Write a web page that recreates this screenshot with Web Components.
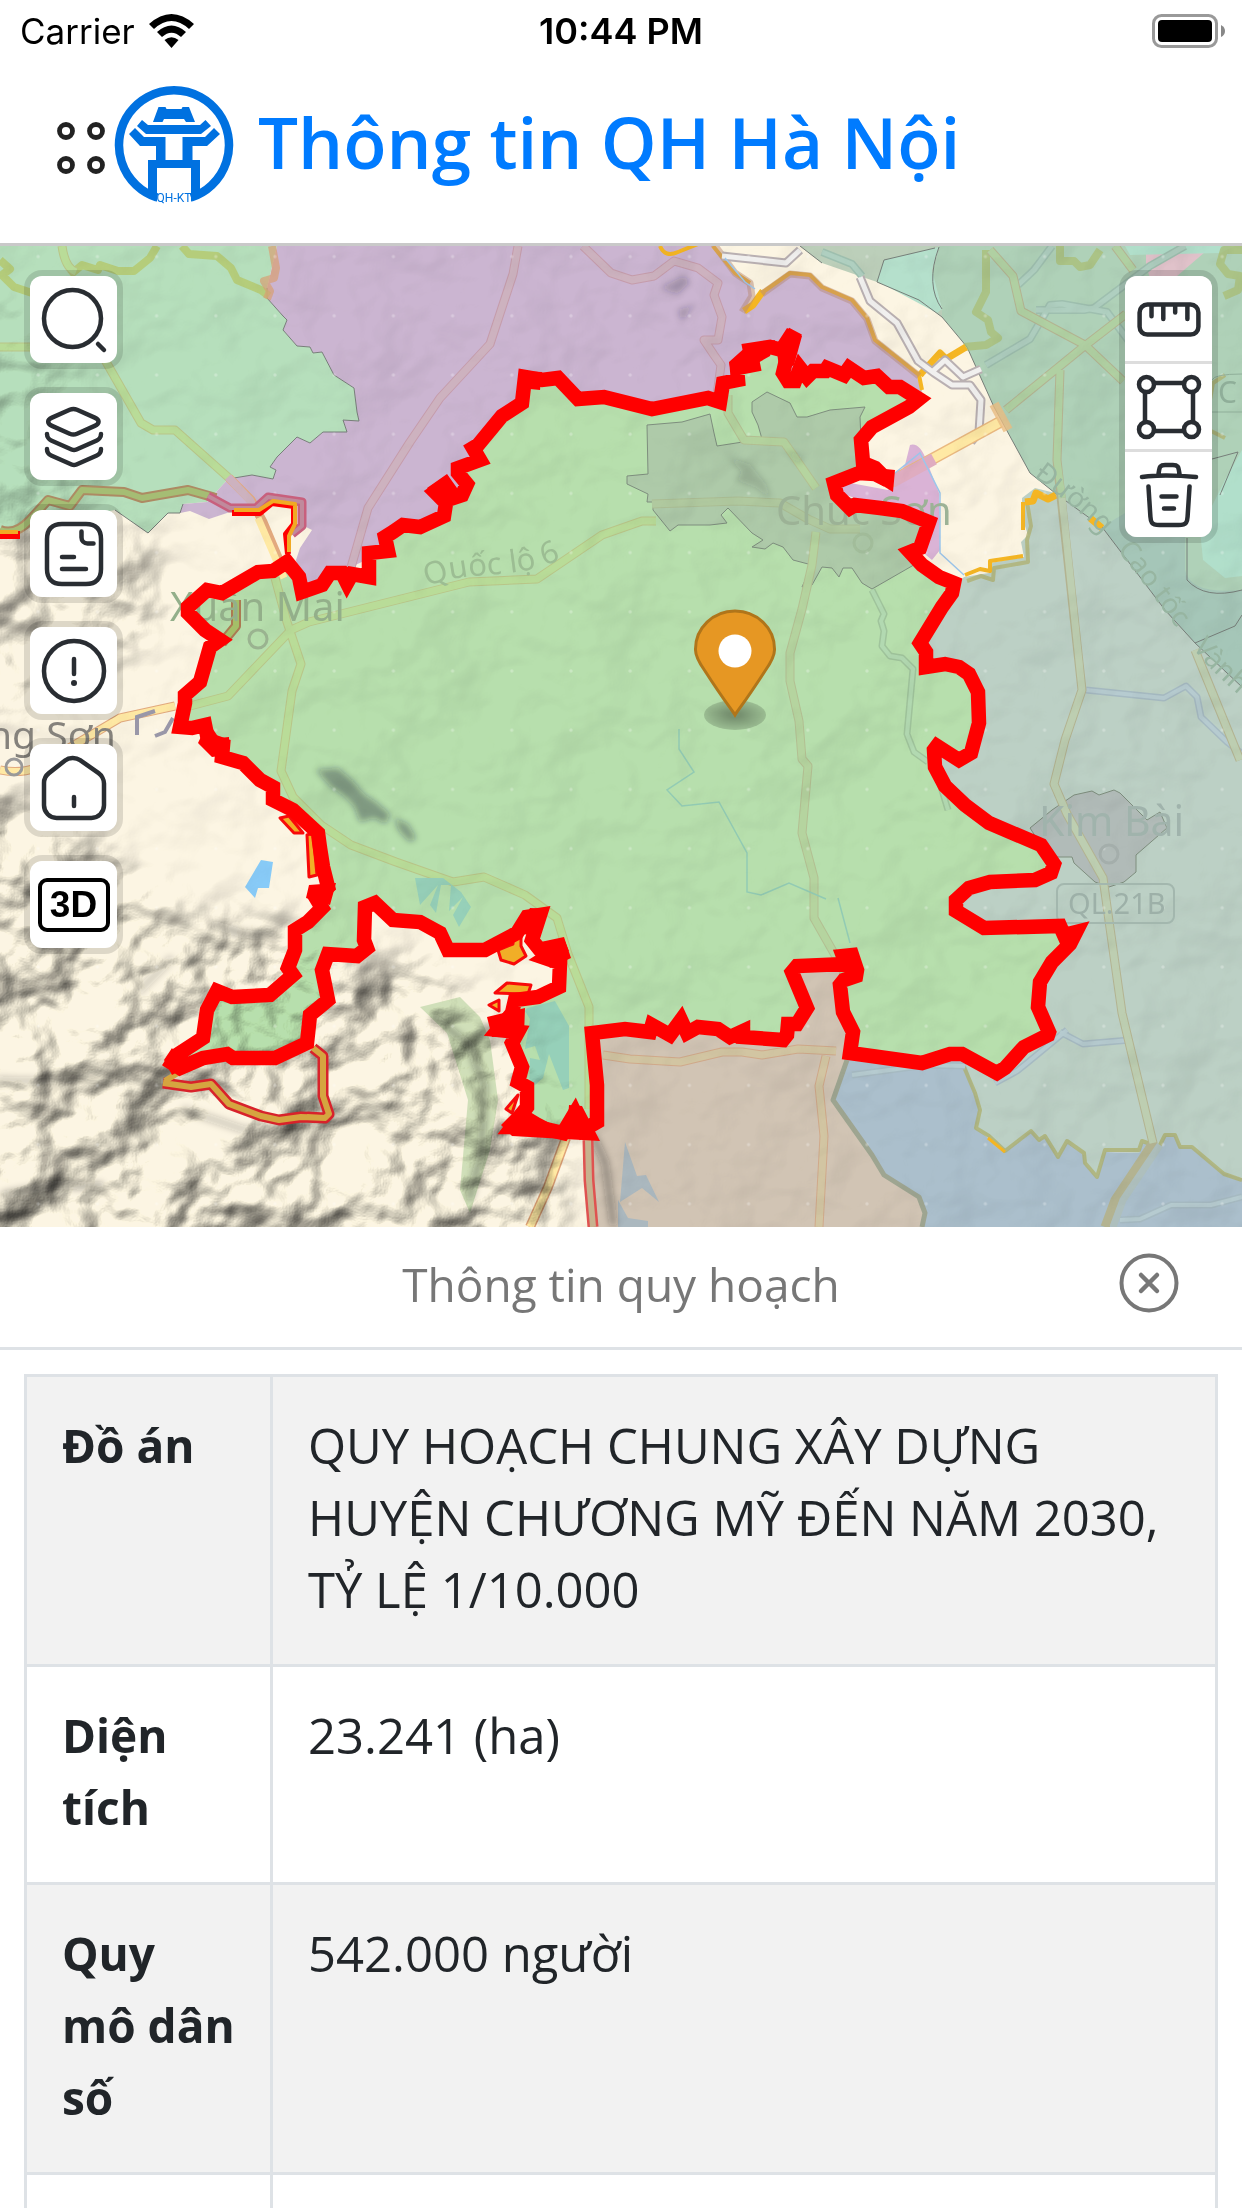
<!DOCTYPE html>
<html lang="vi">
<head>
<meta charset="utf-8">
<meta name="viewport" content="width=device-width, initial-scale=1">
<title>Thông tin QH Hà Nội</title>
<style>
html,body{margin:0;height:100%}
body{font-family:"Open Sans","Noto Sans",sans-serif;color:#212529;background:#fff}
</style>
</head>
<body>
<qh-app></qh-app>

<template id="t-app">
<style>
:host{display:flex;flex-direction:column;height:100vh;overflow:hidden;background:#fff}
</style>
<status-bar></status-bar>
<app-header>Thông tin QH Hà Nội</app-header>
<planning-map>
  <tool-group slot="left" gap>
    <tool-button label="Tìm kiếm" icon="search"></tool-button>
    <tool-button label="Lớp bản đồ" icon="layers"></tool-button>
    <tool-button label="Ghi chú" icon="note"></tool-button>
    <tool-button label="Thông tin" icon="info"></tool-button>
    <tool-button label="Trang chủ" icon="home"></tool-button>
    <tool-button label="3D" icon="three">3D</tool-button>
  </tool-group>
  <tool-group slot="right">
    <tool-button label="Đo khoảng cách" icon="ruler"></tool-button>
    <tool-button label="Đo diện tích" icon="shape"></tool-button>
    <tool-button label="Xóa" icon="trash"></tool-button>
  </tool-group>
</planning-map>
<info-panel>Thông tin quy hoạch</info-panel>
</template>

<template id="t-status">
<style>
:host{display:grid;grid-template-columns:1fr auto 1fr;align-items:center;height:62px;padding:0 16px;font-family:Inter,"Liberation Sans",sans-serif;font-size:35px;line-height:48px;color:#000;flex:none}
.l{display:flex;align-items:center;gap:14px;padding-left:4px}
b{font-weight:600;font-size:36px}
.r{justify-self:end}
svg{display:block}
</style>
<span class="l"><span>Carrier</span>
<svg width="45" height="34" viewBox="0 0 45 34"><path d="M0 10Q22.500-10 45 10L40 15Q22.500-1 5 15Z"/><path d="M8 18Q22.500 5 37 18L32 23Q22.500 14.500 13 23Z"/><path d="M15.500 26Q22.500 20.500 29.500 26L22.500 34Z"/></svg></span>
<b>10:44 PM</b>
<svg class="r" width="74" height="34" viewBox="0 0 74 34"><rect x="1.500" y="1.500" width="63" height="31" rx="8" fill="none" stroke="#999" stroke-width="3"/><rect x="6" y="6" width="54" height="22" rx="4"/><path d="M69 11q4 2 4 6t-4 6z" fill="#888"/></svg>
</template>

<template id="t-header">
<style>
:host{display:flex;align-items:center;height:184px;box-sizing:border-box;border-bottom:3px solid #c9c9c9;padding:0 51px 16px;flex:none}
button{border:0;background:none;padding:0;width:60px;height:60px;margin-top:6px}
svg{display:block}
h1{margin:0 0 6px 24px;font-size:71px;line-height:96px;font-weight:600;color:#007bff}
.logo{margin-left:3px}
</style>
<button aria-label="Menu"><svg width="60" height="60" viewBox="51 118 60 60" fill="none" stroke="#222" stroke-width="4.800"><circle cx="66" cy="131" r="6.500"/><circle cx="96" cy="131" r="6.500"/><circle cx="66" cy="165" r="6.500"/><circle cx="96" cy="165" r="6.500"/></svg></button>
<svg class="logo" width="120" height="120" viewBox="114 84 120 120"><g fill="#0071e0"><path d="M158.500 106h7l1 2h15l1-2h6.500l6 15h-9l-2-3h-20l-1.500 3h-9.500z"/><path d="M142 119l6 5h52l5.500-5 5.500 6-10 8h-55l-9-8z"/><path fill-rule="evenodd" d="M135 127l9 9h61l9-9 6 6-13 12h-14.500v14h7.500v32l-9 10v-34h-34v34l-9-10v-32h8v-14h-16l-11-12zM165.500 136v23h17v-23z"/></g><path d="M157 196.500A55 55 0 1 1 191 196.500" fill="none" stroke="#0071e0" stroke-width="8.500"/><text x="174" y="201" text-anchor="middle" font-family="Roboto,sans-serif" font-size="12" fill="#0071e0">QH-KT</text></svg>
<h1><slot></slot></h1>
</template>

<template id="t-group">
<style>
:host{display:flex;flex-direction:column;gap:3px;background:#ddd;border-radius:12px;box-shadow:0 0 0 6px rgba(0,0,0,.13);--r:0px;--h:85px}
:host([gap]){gap:30px;background:none;box-shadow:none;--r:12px;--s:0 0 0 6px rgba(0,0,0,.12);--h:87px}
::slotted(:first-child){border-radius:12px 12px var(--r) var(--r)}
::slotted(:last-child){border-radius:var(--r) var(--r) 12px 12px}
</style>
<slot></slot>
</template>

<template id="t-button">
<style>
:host{display:block;width:87px;height:var(--h);background:#fff;border-radius:var(--r);box-shadow:var(--s)}
button{display:flex;align-items:center;justify-content:center;width:100%;height:100%;padding:0;border:0;background:none;color:#000}
svg{display:block;width:72px;height:72px;fill:none;stroke:#292d32;stroke-width:1.500;stroke-linecap:round;stroke-linejoin:round}
:host([icon=three]) button span{box-sizing:border-box;width:72px;height:54px;border:4px solid #000;border-radius:9px;font:700 37px/46px "Liberation Sans",sans-serif}
</style>
<button></button>
</template>

<template id="t-map">
<style>
:host{display:block;position:relative;flex:none;overflow:hidden}
svg{display:block;width:100%;height:auto}
.left,.right{position:absolute;top:30px}
.left{left:30px}.right{right:30px}
</style>
<svg viewBox="0 246 1242 981" role="img" aria-label="Bản đồ quy hoạch huyện Chương Mỹ">
<defs>
<filter id="relief" x="0" y="0" width="100%" height="100%" color-interpolation-filters="sRGB"><feTurbulence type="fractalNoise" baseFrequency=".011 .013" numOctaves="4" seed="11"/><feGaussianBlur stdDeviation="2.500"/><feDiffuseLighting surfaceScale="32" diffuseConstant="1.160" lighting-color="#fffffa"><feDistantLight azimuth="225" elevation="56"/></feDiffuseLighting></filter>
<filter id="b3" x="-20%" y="-20%" width="140%" height="140%"><feGaussianBlur stdDeviation="3"/></filter>
<filter id="b20" x="-20%" y="-20%" width="140%" height="140%"><feGaussianBlur stdDeviation="20"/></filter>
<mask id="hills" maskUnits="userSpaceOnUse" x="0" y="246" width="1242" height="981"><rect x="0" y="246" width="1242" height="981" fill="#0e0e0e"/><g filter="url(#b20)"><path d="M-60 500L150 540 170 600 120 660 60 700-60 720z" fill="#888"/><path d="M-60 760L80 840 180 920 280 920 350 970 420 960 560 1100 560 1280-60 1280z" fill="#c4c4c4"/><path d="M-60 300L60 330 110 480-60 560z" fill="#555"/></g></mask>
<pattern id="dots" x="423" y="227" width="59.200" height="59.200" patternUnits="userSpaceOnUse"><circle cx="29.600" cy="29.600" r="1.700" fill="#fff" opacity=".28"/></pattern>
<path id="hw" d="M1033 476C1085 515 1105 532 1150 592S1205 670 1270 720L1400 800"/>
<path id="q6" d="M427 587C470 568 510 582 560 560L620 528"/>
<path id="district" d="M188 613L188 607 207 590 222 593 258 572 273 571 287 562 299 577 302 592 322 585 330 573 342 573 347 583 352 574 369 577 369 553 388 551 385 537 393 532 403 525 420 527 444 516 446 503 435 492 445 485 453 498 462 495 467 484 458 473 458 468 480 460 473 448 478 445 502 416 522 403 525 377 542 380 558 378 578 399 604 397 652 409 708 398 720 402 723 383 738 380 737 368 753 365 750 350 770 347 782 350 795 332 788 352 783 373 788 381 795 381 800 368 807 377 813 371 825 371 827 368 844 375 849 368 864 378 877 376 889 387 900 387 919 399 909 407 872 427 861 440 863 463 875 468 887 480 875 474 859 473 834 483 837 495 850 508 855 505 880 508 902 511 929 522 920 548 910 552 922 565 939 577 954 583 952 593 942 607 920 643 926 652 926 667 945 664 959 667 969 674 978 692 979 723 971 753 959 760 937 746 934 750 935 767 945 786 965 805 989 823 1041 845 1054 864 1051 873 1035 880 990 882 969 888 956 900 956 911 984 928 1060 926 1064 935 1076 932 1070 944 1052 962 1040 982 1038 1007 1049 1032 1048 1035 1024 1047 1005 1068 997 1073 962 1054 950 1054 922 1063 850 1053 853 1032 843 1012 840 985 844 980 856 976 857 970 852 955 843 956 846 964 797 966 792 972 807 1008 797 1024 788 1024 787 1035 783 1040 743 1037 743 1031 730 1037 718 1029 698 1027 687 1033 681 1020 670 1035 652 1025 650 1032 625 1029 592 1033 597 1085 597 1122 583 1130 575 1113 563 1133 537 1127 512 1127 527 1107 527 1087 518 1082 522 1067 512 1043 518 1032 498 1030 512 1013 515 1000 538 997 559 987 560 963 545 958 565 945 540 950 532 940 540 915 527 917 517 933 485 950 448 950 440 933 420 922 393 920 375 903 365 907 364 940 367 948 357 956 328 954 322 970 328 1000 310 1015 307 1043 275 1058 233 1058 227 1054 203 1058 180 1068 172 1063 177 1055 203 1038 207 1010 217 991 232 997 270 995 293 975 288 968 295 950 295 930 308 922 322 908 316 898 328 887 323 867 320 848 318 833 293 810 273 800 273 787 260 780 243 763 222 757 223 745 208 740 205 725 192 728 180 727 185 703 185 695 200 682 210 647 220 640 205 630Z"/>
</defs>
<rect x="0" y="246" width="1242" height="981" fill="#fcf5e3"/>

<g stroke="none">
<path fill="#b6dfbc" d="M0 246H277L267 288 267 298 283 316 287 320 283 330 297 346 310 347 313 353 322 352 334 375 354 388 357 412 359 421 343 420 347 432 323 432 310 443 297 437 277 457 270 467 276 470 273 479 252 475 228 479 207 502 183 504 180 513 168 513 148 533 115 510 60 520 0 536Z"/>
<path fill="#cbb5d1" d="M277 246H713L735 273 750 283 752 296 743 313 763 292 790 273 810 275 822 287 852 300 867 318 875 340 919 375 922 390 920 400 720 410 520 420 430 530 302 590 296 560 300 548 312 530 302 525 304 500 268 496 255 508 230 512 209 519 190 511 180 513 183 504 207 502 228 479 252 475 273 479 276 470 270 467 277 457 297 437 310 443 323 432 347 432 343 420 359 421 357 412 354 388 334 375 322 352 313 353 310 347 297 346 283 330 287 320 283 316 267 298 267 288Z"/>
<path fill="#bccfba" d="M800 246H939L932 275 942 309 942 317 919 300 877 282 822 263Z"/>
<path fill="#afd1b8" d="M939 246H1242V687L1195 643 1165 610 1102 527 1055 493 1030 473 1012 440 994 407 967 347 942 317 942 309 932 275Z"/>
<path fill="#b5e0cc" d="M884 260L939 247 932 270 942 309 937 313 877 281Z"/>
<path fill="#a5c6b8" d="M1102 527L1125 513 1185 508V570Q1190 595 1242 590V687L1195 643 1165 610Z"/>
<path fill="#e0c2ca" d="M1146 246H1212L1155 295 1146 265Z"/>
<path fill="#b1dfcb" d="M1242 450L1225 480 1200 530 1203 560 1225 578 1242 576ZM1125 246h110l-15 7-90 2z"/>
<path fill="#bcd0c5" d="M940 600L964 577 989 573 990 563 1024 557 1021 542 1028 535 1022 517 1022 498 1035 488 1055 493 1102 527 1165 610 1195 643 1242 687V1178L1224 1173 1192 1147 1180 1147 1175 1135 1165 1136 1159 1147 1142 1142 1139 1153 1105 1152 1097 1178 1085 1163 1084 1155 1067 1142 1058 1157 1045 1135 1039 1140 1031 1130 1005 1152 989 1138 976 1128 980 1110 975 1093 964 1067 930 900 920 643Z"/>
<path fill="#abbfcc" d="M847 1055L964 1058 975 1093 980 1110 976 1128 1005 1152 1031 1130 1039 1140 1045 1135 1058 1157 1067 1142 1084 1155 1085 1163 1097 1178 1105 1152 1139 1153 1142 1142 1159 1147 1165 1136 1175 1135 1180 1147 1192 1147 1224 1173 1242 1178V1227H922L925 1213 919 1197 884 1175 872 1155 833 1100Z"/>
<path fill="#d1c4b4" d="M590 1035L800 1020 800 965 850 960 847 1060 833 1100 872 1155 884 1175 919 1197 925 1213 922 1227H592Z"/>
<path fill="#dab3d6" d="M910 445Q920 442 927 462L939 493 940 550 932 560 860 500 838 492 845 482 888 490 905 465Z"/>
<use href="#district" fill="#b7dfad"/>
<g stroke="#7e8e7e" stroke-width="1">
<path fill="#aecaa9" d="M647 425L682 422 710 414 714 433 717 446 762 439 758 425 752 412 752 402 767 392 790 403 797 417 807 417 830 410 865 407 860 417 861 440 863 467 834 483 837 495 902 511 929 522 920 548 922 560 912 566 872 589 862 583 852 568 843 568 839 577 832 568 822 567 812 585 802 587 812 565 793 560 783 547 773 543 765 549 752 547 763 540 752 533 728 508 721 515 727 523 710 525 678 525 670 531 653 510 653 502 647 502 648 494 627 484 627 476 648 474Z"/>
<path fill="#b1bbb8" d="M1030 828L1052 810 1074 795 1092 791 1099 795 1114 790 1120 793 1147 820 1160 812 1167 828 1136 855 1136 872 1124 882 1109 887 1095 882 1074 863 1072 857 1057 857 1041 845Z"/>
</g>
</g>
<g fill="none" stroke="#777f7a" stroke-width="1">
<path d="M267 288V298L283 316 287 320 283 330 297 346 310 347 313 353 322 352 334 375 354 388 357 412 359 421 343 420 347 432 323 432 310 443 297 437 277 457 270 467 276 470 273 479 252 475 228 479M183 504L180 513 168 513 148 533 115 510M800 246L822 263M877 282L884 260 935 248M877 282L919 300 942 317 967 347 994 407 1012 440 1030 473 1055 493 1102 527 1165 610 1195 643 1242 687M939 247Q925 285 942 309M1187 538V580Q1205 600 1242 590M1195 643L1235 626 1242 615M1212 459L1238 452 1220 495"/>
</g>

<g fill="none" stroke-linejoin="round">
<g stroke-width="8" opacity=".75"><path stroke="#b4c765" d="M0 260l10 9-8 6 12 12 18 6M70 275l12-10 16 5 2-5 18 6h16L150 258 157 246M182 246l7 8 28 2 14 12 6 12 24 10 8 6"/><path stroke="#a9bd76" d="M986 250v42l-10 20 12 8 3 12 7 6-12 7-22 2M1060 246v15h14l6 6 10-2 10-15M1242 250h-18l-4 14 8 10 12 2-2 14-14 6"/></g><g stroke="#b0b16f" stroke-width="4" opacity=".75"><path d="M967 581l14-5 12 4 1-12 34-6-1-22 4-14-4-24M1225 375l-12 8-8 45 20 10"/></g>
<path d="M272 246l4 22-2 10-10 3 6 10-3 8" stroke="#d9a074" stroke-width="8" opacity=".7"/>
<g stroke="#f5b623" stroke-width="4"><path d="M660 246q5 12 18 6l20-8M713 246l22 27 15 10M763 292l27-19 20 2 12 12 30 13 15 18 8 22 44 35 3 15M965 575l15-6 10 2v-10l33-5M1023 530v-28"/></g><g stroke="#f5b623" stroke-width="7"><path d="M920 375l20-22 6 6 20-12M744 311l9-6 10-14M1025 502l8-1 3-8 12 6 8-4M1090 518l12 10"/></g>
<path d="M713 243l22 30 15 10 2 13-10 16M762 294l28-20 20 2 12 12 30 13 15 18 8 22 44 35" stroke="#b98c78" stroke-width="7" opacity=".5"/>
<path d="M964 1067l11 26 5 17-4 18 13 8 16 15 26-20 8 9 6-4 13 21 9-16 17 12 1 10 12 14 8-27h34l3-9 17 6 6-12h10l5 12h12l32 27 18 6" stroke="#adb071" stroke-width="4" opacity=".8"/>
<path d="M847 1060l-14 40 39 55 12 20 35 22 6 16-3 14" stroke="#9ea591" stroke-width="5"/><path d="M988 1138l17 14" stroke="#f5b623" stroke-width="3"/>
</g>

<g fill="none" stroke-linejoin="round">
<g stroke="#b9b0b2" stroke-width="9"><path d="M860 277l10 24 27 22 21 38 16 12 18 12h18l11 15-2 32-8 10M932 372l13-12 18 17 18-8M722 256L786 263 800 250"/></g>
<g stroke="#9ebfaf" stroke-width="8"><path d="M822 252l30 12 10 12M1052 246l-18 24-16 15M1185 246l-35 20-56 42-10 2-48 0M986 365l44-26 20-34 12-1 45 8 24 32"/></g>
<g stroke="#f1f0ef" stroke-width="5"><path d="M860 277l10 24 27 22 21 38 16 12 18 12h18l11 15-2 32-8 10M932 372l13-12 18 17 18-8M722 256L786 263 800 250"/></g>
<g stroke="#afcfc0" stroke-width="5"><path d="M822 252l30 12 10 12M1052 246l-18 24-16 15M1185 246l-35 20-56 42-10 2-48 0M986 365l44-26 20-34 12-1 45 8 24 32"/></g>
<g stroke="#a6bac2" stroke-width="7"><path d="M1086 690l78 8 22-12 11 11 4 20 26 25 18 14M1130 1040l-47 4-23-12M995 1083l22-12 10-8 40-33M1120 1220l20-1 31-14h40l31-8M852 1075l75-10 38 1"/></g><g stroke="#b6cbd0" stroke-width="4"><path d="M1086 690l78 8 22-12 11 11 4 20 26 25 18 14M1130 1040l-47 4-23-12M995 1083l22-12 10-8 40-33M1120 1220l20-1 31-14h40l31-8M852 1075l75-10 38 1"/></g>
<g stroke="#a0c49c" stroke-width="7"><path d="M872 590l12 24-3 7 3 10-2 15 8 10 12 2 11 11-6 65 7 18 14 10M936 770l12 40"/></g><g stroke="#b2d9b1" stroke-width="4"><path d="M872 590l12 24-3 7 3 10-2 15 8 10 12 2 11 11-6 65 7 18 14 10M936 770l12 40"/></g>
</g>

<g fill="none" stroke-linejoin="round">
<path d="M62 246q3 22 14 26M0 347h30M105 360l36 63 12 7h22l54 48M275 578l12 44 14 42-9 27-11 80 12 26 28 28 30 20 45 17 57 20 31-5 41 18 32 23 11 36 21 53v102M190 706l38-10 63-66 18-8 160-40 68-3 65-44 40-14h14" stroke="#b9c588" stroke-width="9"/>
<path d="M62 246q3 22 14 26M0 347h30M105 360l36 63 12 7h22l54 48M275 578l12 44 14 42-9 27-11 80 12 26 28 28 30 20 45 17 57 20 31-5 41 18 32 23 11 36 21 53v102M190 706l38-10 63-66 18-8 160-40 68-3 65-44 40-14h14" stroke="#b9dc98" stroke-width="7"/>
<path d="M652 504l86-3 42 2 28 16 22 10h30" stroke="#abbd94" stroke-width="9"/><path d="M652 504l86-3 42 2 28 16 22 10h30" stroke="#b0c99f" stroke-width="7"/>
<path d="M229 478l22 22 12 22 22 52M0 770q20 4 35-2l85-50 55-12" stroke="#e3aa7e" stroke-width="9"/><path d="M258 518l26 60M0 770q20 4 35-2l85-50 55-12" stroke="#ffe9a4" stroke-width="7"/><path d="M228 477l22 23 6 12" stroke="#cdb2bf" stroke-width="8"/>
<g stroke="#c59cab" stroke-width="9"><path d="M518 246l-5 28-23 70-50 54-30 44-42 66-20 70M583 246l28 27 21 7 22-4 20-15 24 7 20 15-4 12 8 22-4 23h-14l10 15 7 10-4 30"/></g><g stroke="#cdb2bf" stroke-width="7"><path d="M518 246l-5 28-23 70-50 54-30 44-42 66-20 70M583 246l28 27 21 7 22-4 20-15 24 7 20 15-4 12 8 22-4 23h-14l10 15 7 10-4 30"/></g>
<g stroke="#b3bf92" stroke-width="9"><path d="M728 395v18l16 27 40 2 14 20 18 26M816 532l-4 33-10 44-12 44v28l9 40 3 38 6 7-6 67 12 45v40l21 37 10 10-3 18"/></g><g stroke="#b5d49f" stroke-width="7"><path d="M728 395v18l16 27 40 2 14 20 18 26M816 532l-4 33-10 44-12 44v28l9 40 3 38 6 7-6 67 12 45v40l21 37 10 10-3 18"/></g>
<g stroke="#b3b391" stroke-width="9"><path d="M1060 370l-3 90 25 230-17 50-11 44 13 30 36 64 7 50 12 85 31 130-38 57-10 27M1195 650l45 110M990 250l23 26 8 35 64 34 38 36M1115 246l18 24M1006 410l76-62 44-34"/></g><g stroke="#b0d0a2" stroke-width="7"><path d="M1060 370l-3 90 5 38M990 250l23 26 8 35 64 34 38 36M1115 246l18 24M1006 410l76-62 44-34"/></g><g stroke="#bdceb1" stroke-width="7"><path d="M1062 498l20 192-17 50-11 44 13 30 36 64 7 50 12 85 31 130M1195 650l45 110"/></g><path d="M1160 1145l-37 55-10 27" stroke="#aebfbd" stroke-width="7"/>
<path d="M890 482l110-60" stroke="#eab980" stroke-width="12"/><path d="M892 481l108-59" stroke="#ffe9a4" stroke-width="9"/><path d="M892 482l42-23" stroke="#dfacc0" stroke-width="12"/><path d="M994 404l14 26" stroke="#eebf83" stroke-width="10" opacity=".8"/>
<g stroke="#d0a98a" stroke-width="9"><path d="M603 1055l27 4 50 3 42-10h20l20 3 36-6 38 2M826 1056l-7 30 5 50-5 91"/></g><g stroke="#d2c5a2" stroke-width="7"><path d="M603 1055l27 4 50 3 42-10h20l20 3 36-6 38 2M826 1056l-7 30 5 50-5 91"/></g><path d="M566 1138l-18 49-18 40" stroke="#e0a378" stroke-width="10"/><path d="M566 1138l-18 49-18 40" stroke="#ffe9a4" stroke-width="7"/>
</g>

<g fill="#96d0b9"><path d="M415 878h28l18 14 10 15-12 20-6-12 10-18-14 14 2-26h-10l-5 28-6-8 8-20-18 20zM527 1008l28-7 14 25v62l-6 2-14-36-6 24-14 12 1-32 10 2-5-14-10 3 5-30-5-8z"/></g><path fill="#88cbf8" d="M261 860l12 2-4 26h-11l-3 10-10-11z"/><path fill="#abb8bf" d="M625 1142l12 34 9-1 13 27-17-14-22 14zM618 1200l10 18 20 3v6h-30z"/>
<g fill="none" stroke="#92cbb4" stroke-width="1.500"><path d="M679 729v20l15 23-27 18 15 16 37-4 28 51v39l14 3 28-12 37 16M838 898l12 45"/></g><path fill="none" stroke="#9cc6ec" stroke-width="1.500" d="M725 258l20 24 10 7M895 473l25-20 20 40v60l24 22"/>
<path fill="#d0dfb9" d="M420 1007l40-10 20 20 10 23 8 60-8 50-20 63-10-23 8-90-21-67z"/>

<g style="mix-blend-mode:multiply"><g mask="url(#hills)"><rect x="-40" y="206" width="1322" height="1061" filter="url(#relief)"/></g></g>
<g filter="url(#b3)" fill="none" stroke="#222" stroke-linecap="round">
<g fill="#223" stroke="none" opacity=".36"><path d="M316 770l22-2 14 12 12 14 12 8 14 12-4 10-12-6-14 4-6-16-10-10-14-10zM394 818l14 6 8 14-6 4-10-10z"/><path d="M660 288l24-12 6 6-12 12zM678 310l20-6-8 6-8 12z" opacity=".7"/><path d="M726 456l24 8 16 20 6 16-16-12-20-8 6-8zM784 450l20 6-6 8z" opacity=".45"/></g>
<g opacity=".3" stroke-width="8"><path d="M215 925l28 9 30 2M435 1018l35 28 14 40-3 70-11 40"/><path d="M595 1140l10 22 8 60M5 1195l50-10 45 1"/><path d="M0 1080q90 5 110-15M140 990l30-30M185 1110l60 20 90-10" opacity=".6"/></g>
</g>
<rect x="0" y="246" width="1242" height="981" fill="url(#dots)"/>

<g fill="none" stroke-linejoin="round">
<path d="M0 530q15 6 30-10l18-20 22 6 12-16 42 2 18 6 46-8 28 8" stroke="#ad8a63" stroke-width="10"/><path d="M0 530q15 6 30-10l18-20 22 6 12-16 42 2 18 6 46-8 22 6" stroke="#a5bd74" stroke-width="6"/>
<path d="M208 496l22 12h26l12-11 34 5v24l-10 8" stroke="#c8607d" stroke-width="9"/><path d="M208 496l22 12h26l12-11 34 5v24l-10 8" stroke="#c08a9c" stroke-width="4"/><path d="M0 535h20" stroke="#f00" stroke-width="8"/><path d="M232 513h28l12-10 22 3v18l-8 10 2 20" stroke="#f00" stroke-width="6"/><path d="M234 510h25l14-9 22 3v20l-6 12v16M0 532h18" stroke="#f1aa24" stroke-width="4"/>
<path d="M163 1083l28 4 20-3 18 20 32 12 18 4 22-3 25 1M313 1048l10 8v40l6 18-4 4-18-1" stroke="#d8222b" stroke-width="11"/><path d="M163 1083l28 4 20-3 18 20 32 12 18 4 22-3 25 1M313 1048l10 8v40l6 18-4 4-18-1M165 1081l16-10" stroke="#d5a540" stroke-width="6"/>
<path d="M588 1140l1 40 4 47" stroke="#df5250" stroke-width="11"/><path d="M588 1140l1 40 4 47" stroke="#c7b28e" stroke-width="6"/><path d="M236 600v26l-14 17" stroke="#ab7a52" stroke-width="10"/><path d="M236 600v26l-14 17" stroke="#a4bf68" stroke-width="6"/>
<g fill="#f1ae27" stroke="#f80a0a" stroke-width="3"><path d="M280 818l14 15h9l-14-17zM307 835l2 42 8-2-4-42zM498 950l15-6v-12l8 2v12l5 10-12 8-13-4zM507 983l24 2-3 9-33-1zM499 1000l-10 5 10 6zM518 1095l-12 14 6 4z"/></g>
</g>

<g font-family='"Noto Sans",sans-serif' font-size="40">
<text x="170" y="621" fill="#93af8a">Xuân Mai</text><text x="-12" y="749" fill="#85827c" font-size="39">ng Sơn</text>
<text x="776" y="525" fill="#9cb296" font-size="40">Chúc Sơn</text><text x="1039" y="836" fill="#a0b3ac" font-size="41">Kim Bài</text>
<text fill="#9cbd93" font-size="31"><textPath href="#q6">Quốc lộ 6</textPath></text>
<g fill="#97b5a1" font-size="28"><text><textPath href="#hw">Đường</textPath></text><text><textPath href="#hw" startOffset="112">Cao tốc</textPath></text><text><textPath href="#hw" startOffset="235">Vành</textPath></text></g>
<rect x="1057" y="884" width="117" height="39" rx="7" fill="none" stroke="#a3b7ae" stroke-width="2"/><text x="1068" y="914" font-size="29" fill="#9db0a8">QL.21B</text>
<text x="1218" y="403" font-size="30" fill="#8fae99">C</text><path d="M1212 380q2-6 30-6M1210 412h32" fill="none" stroke="#8fae99"/>
</g>
<g fill="none" stroke="#9ab390" stroke-width="3"><circle cx="258" cy="639" r="9"/><circle cx="863" cy="543" r="9" opacity=".5"/><circle cx="1109" cy="854" r="9" stroke="#a4aeab"/><circle cx="14" cy="767" r="8" stroke="#999"/></g>
<path d="M155 711l-18 6v18M155 736l10-4 8-14" fill="none" stroke="#9997a8" stroke-width="4"/>

<use href="#district" fill="none" stroke="#f00" stroke-width="14.500" stroke-miterlimit="3"/>
<path fill="#f00" d="M487 1017L525 1008 524 1035 492 1037ZM501 1125L520 1106 540 1118 567 1132 569 1105 582 1106 600 1141 512 1136ZM536 943L564 937 571 958 550 968ZM516 934L530 908 547 909 540 935ZM427 488L447 474 462 495 440 506ZM519 371L542 372 540 390 520 388ZM787 328L802 336 794 365 780 374 776 345ZM164 1060L172 1048 185 1068 172 1075ZM309 885L336 883 330 905 306 898ZM208 722L219 738 229 737 229 755 212 757 198 743ZM748 345L775 340 770 356 742 372 733 382 729 362ZM866 467L895 470 893 492 880 484Z"/>
<radialGradient id="sh"><stop offset=".2" stop-color="#000" stop-opacity=".35"/><stop offset="1" stop-color="#000" stop-opacity=".15"/></radialGradient>
<ellipse cx="735" cy="715" rx="31" ry="15" fill="url(#sh)"/>
<path d="M735 715C732 710 725 702 705 671Q695 657 695.500 649A39.500 38 0 0 1 774.500 649Q775 657 765 671C745 702 738 710 735 715Z" fill="#e69723" stroke="#b0751a" stroke-width="3"/><circle cx="735" cy="651" r="16.500" fill="#fff"/>
</svg>
<slot class="left" name="left" style="display:block"></slot>
<slot class="right" name="right" style="display:block"></slot>
</template>

<template id="t-panel">
<style>
:host{display:flex;flex-direction:column;flex:1;min-height:0;overflow:hidden}
header{display:grid;grid-template-columns:72px 1fr 72px;align-items:center;height:123px;box-sizing:border-box;padding:0 57px;border-bottom:3px solid #dee2e6;flex:none}
h2{grid-column:2;margin:0 0 6px;text-align:center;font-size:46px;line-height:72px;font-weight:400;color:#777}
button{width:72px;height:72px;padding:0;border:0;background:none;margin-bottom:9px}
svg{display:block}
main{padding:24px}
table{width:100%;border-collapse:collapse;font-size:49px;line-height:72px;table-layout:fixed}
col:first-child{width:246px}
th,td{box-sizing:border-box;border:3px solid #dee2e6;padding:32px 35px 39px;text-align:left;vertical-align:top;font-weight:400}
th{font-weight:700;font-size:46px}
tr:nth-child(odd){background:#f2f2f2}
</style>
<header><h2><slot></slot></h2><button aria-label="Đóng"><svg width="72" height="72" viewBox="0 0 72 72" fill="none" stroke="#777" stroke-width="4" stroke-linecap="round"><circle cx="36" cy="36" r="27.500"/><path d="M28 28l16 16M44 28L28 44" stroke-width="4.500"/></svg></button></header>
<main><table><colgroup><col><col></colgroup><tbody></tbody></table></main>
</template>

<script>
const icons = {
  search: '<circle cx="11.5" cy="11.5" r="9.500"/><path d="M22 22l-2-2"/>',
  layers: '<path d="M13.010 2.920l5.900 2.620c1.700.75 1.700 1.990 0 2.740l-5.900 2.620c-.67.3-1.770.3-2.440 0l-5.900-2.620c-1.700-.75-1.700-1.990 0-2.740l5.900-2.620c.67-.3 1.770-.3 2.440 0z"/><path d="M3 11c0 .84.63 1.810 1.400 2.150l6.790 3.020c.52.23 1.110.23 1.620 0l6.790-3.020c.77-.34 1.400-1.310 1.400-2.150M3 16c0 .93.55 1.770 1.400 2.150l6.790 3.020c.52.23 1.110.23 1.620 0l6.790-3.020c.85-.38 1.400-1.220 1.400-2.150"/>',
  note: '<path d="M21 7v10c0 3-1.500 5-5 5H8c-3.500 0-5-2-5-5V7c0-3 1.500-5 5-5h8c3.500 0 5 2 5 5zM14.500 4.500v2c0 1.100.9 2 2 2h2M8 13h4M8 17h8"/>',
  info: '<circle cx="12" cy="12" r="10"/><path d="M12 8v5"/><path d="M12 16h.01" stroke-width="2"/>',
  home: '<path d="M9.020 2.840L3.630 7.040C2.730 7.740 2 9.230 2 10.360v7.410c0 2.320 1.890 4.220 4.210 4.220h11.580c2.320 0 4.210-1.900 4.210-4.210V10.500c0-1.210-.81-2.760-1.800-3.450l-6.180-4.330c-1.400-.98-3.650-.93-5 .12zM12 17.990v-3"/>',
  ruler: '<rect x="2.200" y="7.200" width="19.600" height="10" rx="2.600"/><path d="M6.170 7.500v3.600M10.100 7.500V12M14.060 7.500v2.300M18.130 7.500V12"/>',
  shape: '<path d="M7 4h10M20 7v10M17 20H7M4 17V7"/><g><circle cx="4.500" cy="4.500" r="2.500"/><circle cx="19.500" cy="4.500" r="2.500"/><circle cx="4.500" cy="19.500" r="2.500"/><circle cx="19.500" cy="19.500" r="2.500"/></g>',
  trash: '<path d="M21 5.980c-3.330-.33-6.680-.5-10.020-.5-1.980 0-3.960.1-5.940.3L3 5.980M8.500 4.970l.22-1.310C8.880 2.710 9 2 10.690 2h2.620c1.690 0 1.820.75 1.970 1.670l.22 1.300M18.850 9.140l-.65 10.070C18.090 20.780 18 22 15.210 22H8.790C6 22 5.910 20.780 5.800 19.210L5.150 9.140M10.330 16.500h3.330M9.500 12.500h5"/>'
};
const rows = [
  ['Đồ án', 'QUY HOẠCH CHUNG XÂY DỰNG HUYỆN CHƯƠNG MỸ ĐẾN NĂM 2030, TỶ LỆ 1/10.000'],
  ['Diện tích', '23.241 (ha)'],
  ['Quy mô dân số', '542.000 người'],
  ['', '']
];
class Base extends HTMLElement {
  constructor() {
    super();
    this.attachShadow({mode: 'open'}).append(document.getElementById(this.constructor.tpl).content.cloneNode(true));
  }
}
customElements.define('status-bar', class extends Base { static tpl = 't-status'; });
customElements.define('app-header', class extends Base { static tpl = 't-header'; });
customElements.define('tool-group', class extends Base { static tpl = 't-group'; });
customElements.define('tool-button', class extends Base {
  static tpl = 't-button';
  connectedCallback() {
    const b = this.shadowRoot.querySelector('button');
    const icon = icons[this.getAttribute('icon')];
    b.setAttribute('aria-label', this.getAttribute('label'));
    b.innerHTML = icon ? '<svg viewBox="0 0 24 24">' + icon + '</svg>' : '<span><slot></slot></span>';
  }
});
customElements.define('planning-map', class extends Base { static tpl = 't-map'; });
customElements.define('info-panel', class extends Base {
  static tpl = 't-panel';
  connectedCallback() {
    const body = this.shadowRoot.querySelector('tbody');
    for (const [name, value] of rows) {
      const tr = body.insertRow();
      const th = document.createElement('th');
      th.scope = 'row';
      th.textContent = name;
      tr.append(th);
      tr.insertCell().textContent = value;
    }
  }
});
customElements.define('qh-app', class extends Base { static tpl = 't-app'; });
</script>
</body>
</html>
